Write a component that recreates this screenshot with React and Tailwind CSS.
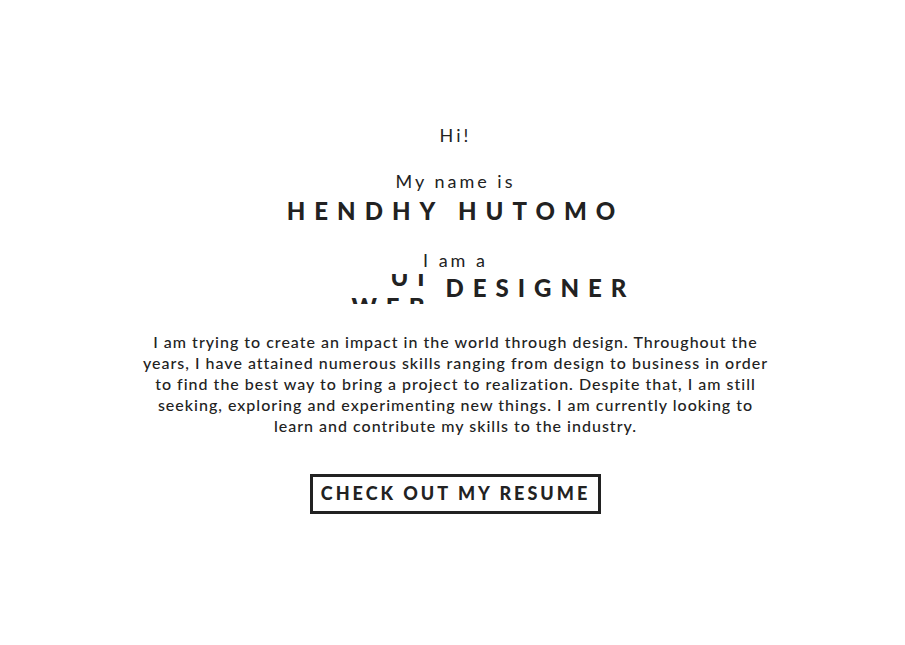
const roles = ["UI", "WEB"];

function RoleTicker() {
  return (
    <span className="block h-[30px] w-[158px] overflow-hidden text-right">
      <span className="-mt-3 block">
        {roles.map((role) => (
          <span key={role} className="block leading-[30px]">
            {role}
          </span>
        ))}
      </span>
    </span>
  );
}

export default function App() {
  return (
    <main className="flex min-h-screen flex-col items-center bg-white pt-[120px] pr-6 pb-16 pl-[30px] text-center font-['Lato','Liberation_Sans',sans-serif] text-[#222222]">
      <p className="text-[18px] leading-[30px] tracking-[3px]">Hi!</p>
      <h1 className="mt-4">
        <span className="block text-[18px] leading-[30px] tracking-[3px]">My name is</span>
        <span className="block text-[24px] leading-[30px] font-black tracking-[9px]">HENDHY HUTOMO</span>
      </h1>
      <h2 className="mt-5 flex flex-col items-center">
        <span className="text-[18px] leading-[28px] tracking-[3px]">I am a</span>
        <span className="flex gap-3 text-[24px] font-black tracking-[9px]">
          <RoleTicker />
          <span className="leading-[28px]">DESIGNER</span>
        </span>
      </h2>
      <p className="mt-[27px] w-full max-w-[638px] text-[16px] leading-[21px] font-medium tracking-[1px]">
        I am trying to create an impact in the world through design. Throughout the years, I have
        attained numerous skills ranging from design to business in order to find the best way to
        bring a project to realization. Despite that, I am still seeking, exploring and
        experimenting new things. I am currently looking to learn and contribute my skills to the
        industry.
      </p>
      <button
        type="button"
        className="mt-[38px] h-10 border-3 border-[#222222] px-2 pb-0.5 text-[18px] leading-[30px] font-black tracking-[3px]"
      >
        CHECK OUT MY RESUME
      </button>
    </main>
  );
}
